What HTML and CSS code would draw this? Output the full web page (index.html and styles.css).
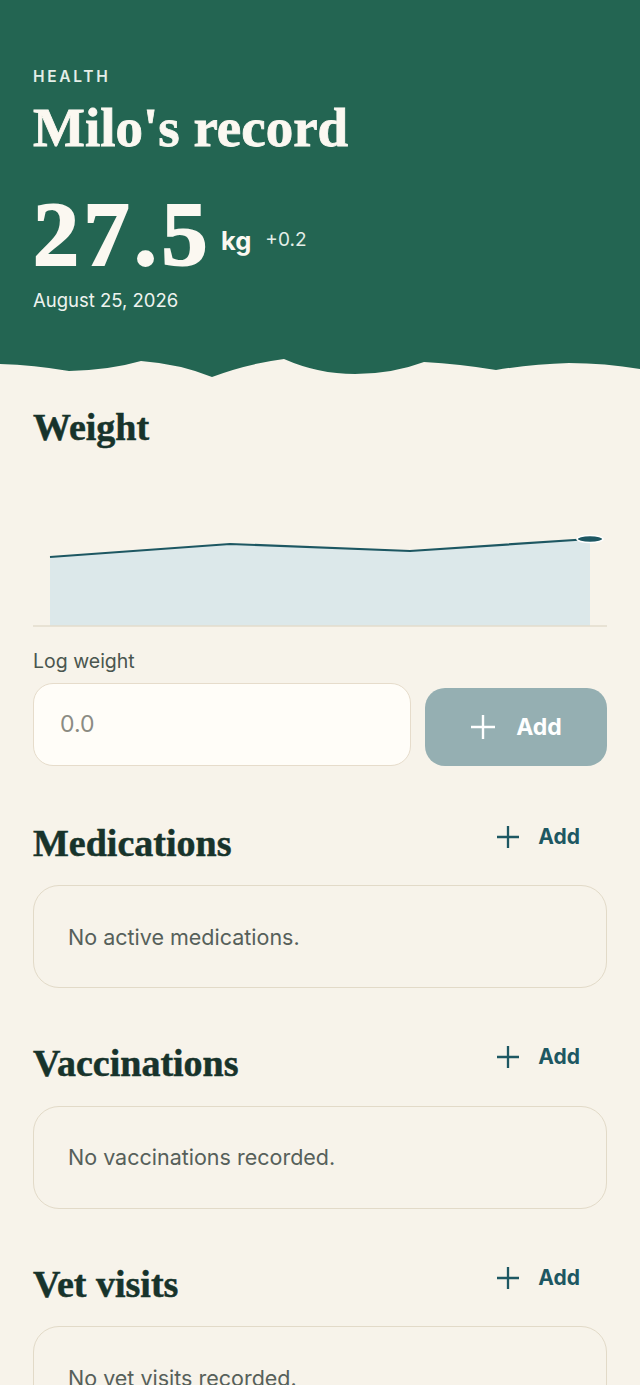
FILE: index.html
```html
<!DOCTYPE html>
<html>
<head>
    <meta charset="utf-8">
    <title>Milo's record</title>
    <link rel="stylesheet" href="styles.css">
</head>
<body>
    <div class="hero">
        <div class="eyebrow">HEALTH</div>
        <h1>Milo's record</h1>
        <div class="weight-now">
            <span class="weight-value">27.5</span>
            <span class="weight-unit">kg</span>
            <span class="weight-delta">+0.2</span>
        </div>
        <div class="weight-date">August 25, 2026</div>
    </div>
    <svg class="wave" viewBox="0 0 640 22" preserveAspectRatio="none">
        <path d="M0 0 H640 V11 Q605 5 569 5 Q532 6 496 12 Q460 6 424 4 Q392 16 355 16 Q318 16 284 1 Q246 6 212 19 Q180 6 141 3 Q110 12 69 13 Q34 7 0 6 Z" fill="#236552"/>
    </svg>

    <div class="content">
        <section class="block">
            <h2>Weight</h2>
            <svg class="chart" width="574" height="160" viewBox="0 0 574 160">
                <path d="M17 90 L197 77 L377 84 L557 72 L557 159 L17 159 Z" fill="#dce8ea"/>
                <path d="M17 90 L197 77 L377 84 L557 72" fill="none" stroke="#1d5762" stroke-width="2.2"/>
                <line x1="0" y1="159" x2="574" y2="159" stroke="#e3dccd" stroke-width="1.5"/>
                <ellipse cx="557" cy="72" rx="13" ry="3.5" fill="#1d5762" stroke="#fff" stroke-width="1.5"/>
            </svg>

            <label class="field-label" for="weightInput">Log weight</label>
            <div class="log-row">
                <input type="text" id="weightInput" placeholder="0.0">
                <button class="add-btn">
                    <svg width="26" height="26" viewBox="0 0 26 26"><path d="M13 1 V25 M1 13 H25" stroke="#fff" stroke-width="2.4" fill="none"/></svg>
                    Add
                </button>
            </div>
        </section>

        <section class="block">
            <div class="section-head">
                <h2>Medications</h2>
                <a class="add-link" href="#">
                    <svg width="22" height="22" viewBox="0 0 22 22"><path d="M11 0 V22 M0 11 H22" stroke="#1d5762" stroke-width="2.3" fill="none"/></svg>
                    Add
                </a>
            </div>
            <div class="empty-card">No active medications.</div>
        </section>

        <section class="block">
            <div class="section-head">
                <h2>Vaccinations</h2>
                <a class="add-link" href="#">
                    <svg width="22" height="22" viewBox="0 0 22 22"><path d="M11 0 V22 M0 11 H22" stroke="#1d5762" stroke-width="2.3" fill="none"/></svg>
                    Add
                </a>
            </div>
            <div class="empty-card">No vaccinations recorded.</div>
        </section>

        <section class="block">
            <div class="section-head">
                <h2>Vet visits</h2>
                <a class="add-link" href="#">
                    <svg width="22" height="22" viewBox="0 0 22 22"><path d="M11 0 V22 M0 11 H22" stroke="#1d5762" stroke-width="2.3" fill="none"/></svg>
                    Add
                </a>
            </div>
            <div class="empty-card">No vet visits recorded.</div>
        </section>
    </div>
</body>
</html>
```

FILE: styles.css
```css
body {
    margin: 0;
    background: #f7f3ea;
    font-family: Inter, "Noto Sans", sans-serif;
    color: #17332b;
}

.hero {
    background: #236552;
    color: #fbf8f1;
    padding: 68px 33px 48px 33px;
}

.eyebrow {
    font-size: 15.5px;
    line-height: 18px;
    font-weight: 600;
    letter-spacing: 2.7px;
    color: #e4eee8;
}

h1 {
    font-family: "Liberation Serif", serif;
    font-size: 55px;
    line-height: 60.5px;
    font-weight: bold;
    margin: 12px 0 0 0;
    -webkit-text-stroke: 0.8px #fbf8f1;
}

.weight-now {
    display: flex;
    align-items: flex-end;
    margin-top: 29px;
}

.weight-value {
    font-family: "Liberation Serif", serif;
    font-size: 92px;
    line-height: 92px;
    font-weight: bold;
    letter-spacing: 4.5px;
    -webkit-text-stroke: 2px #fbf8f1;
}

.weight-unit {
    font-size: 25.5px;
    line-height: 25px;
    font-weight: 700;
    margin: 0 0 27px 9px;
}

.weight-delta {
    font-size: 19px;
    line-height: 19px;
    margin: 0 0 31px 14px;
    color: #e4eee8;
}

.weight-date {
    font-size: 18.5px;
    line-height: 20px;
    margin-top: 10px;
    color: #eef3ef;
}

.wave {
    display: block;
    width: 100%;
    height: 22px;
}

.content {
    padding: 25px 33px 40px 33px;
}

h2 {
    font-family: "Liberation Serif", serif;
    font-size: 38px;
    line-height: 44.4px;
    font-weight: bold;
    margin: 0;
    color: #17332b;
    -webkit-text-stroke: 0.5px #17332b;
}

.block + .block {
    margin-top: 55px;
}

.block + .block + .block {
    margin-top: 53px;
}

.chart {
    display: block;
    margin-top: 18px;
}

.field-label {
    display: block;
    font-size: 19.5px;
    line-height: 24px;
    color: #4a564f;
    margin-top: 22px;
}

.log-row {
    display: flex;
    align-items: flex-end;
    gap: 14px;
    margin-top: 10px;
}

.log-row input {
    width: 378px;
    height: 83px;
    box-sizing: border-box;
    padding: 0 26px;
    font-family: Inter, sans-serif;
    font-size: 23px;
    background: #fffdf8;
    border: 1.5px solid #e6dccb;
    border-radius: 20px;
    outline: none;
}

.log-row input::placeholder {
    color: #8b8b83;
}

.add-btn {
    flex: 1;
    height: 78px;
    display: flex;
    align-items: center;
    justify-content: center;
    gap: 20px;
    background: #95afb2;
    color: #fff;
    border: none;
    border-radius: 20px;
    font-family: Inter, sans-serif;
    font-size: 23px;
    font-weight: 700;
}

.section-head {
    display: flex;
    justify-content: space-between;
    align-items: flex-start;
}

.add-link {
    display: flex;
    align-items: center;
    gap: 19px;
    margin: 4px 27px 0 0;
    font-size: 21px;
    line-height: 24px;
    font-weight: 700;
    color: #1d5762;
    text-decoration: none;
}

.empty-card {
    margin-top: 20px;
    height: 103px;
    box-sizing: border-box;
    display: flex;
    align-items: center;
    padding-left: 34px;
    border: 1.5px solid #e2dac8;
    border-radius: 26px;
    font-size: 21.5px;
    color: #56605a;
}
```
